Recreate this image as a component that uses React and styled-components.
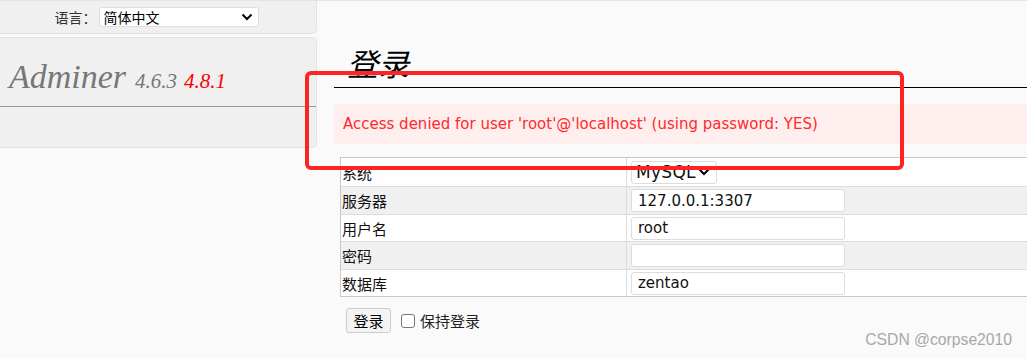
import React from 'react'
import styled, { createGlobalStyle } from 'styled-components'

const GlobalStyle = createGlobalStyle`
  html, body {
    margin: 0;
    padding: 0;
    background: #fafafa;
    overflow: hidden;
  }
  body {
    font-family: "DejaVu Sans", "Noto Sans CJK SC", sans-serif;
    font-size: 14px;
    color: #000;
  }
`

const Page = styled.div`
  position: relative;
  width: 1027px;
  height: 359px;
  display: flex;
  border-top: 1px solid #e4e4e4;
  box-sizing: border-box;
`

const Menu = styled.div`
  width: 317px;
  flex: none;
  display: flex;
  flex-direction: column;
  gap: 3px;
`

const Panel = styled.div`
  background: #f0f0f0;
  border: 1px solid #e2e2e2;
  border-left: none;
  border-radius: 0 0 5px 0;
  ${p => p.$top ? 'border-top: none;' : 'border-radius: 0 5px 5px 0;'}
`

const LangBar = styled(Panel)`
  height: 33px;
  display: flex;
  align-items: center;
  justify-content: center;
  gap: 2px;
  padding-right: 3px;
  box-sizing: border-box;
  font-family: "Noto Sans CJK SC", sans-serif;
  font-size: 14px;
  color: #333;
`

const SmallSelect = styled.div`
  width: 160px;
  height: 20px;
  background: #fff;
  border: 1px solid #ddd;
  border-radius: 3px;
  box-sizing: border-box;
  display: flex;
  align-items: center;
  justify-content: space-between;
  padding: 0 5px 0 4px;
  font-family: "Noto Sans CJK SC", sans-serif;
  font-size: 14px;
  color: #000;
`

const LogoPanel = styled(Panel)`
  height: 109px;
  display: flex;
  flex-direction: column;
`

const Logo = styled.h1`
  margin: 0;
  height: 69px;
  box-sizing: border-box;
  padding: 20px 0 0 9px;
  border-bottom: 1px solid #999;
  font-family: "Liberation Serif", serif;
  font-style: italic;
  font-weight: normal;
  font-size: 34px;
  color: #777;
  white-space: nowrap;
`

const Version = styled.span`
  font-size: 21px;
  margin-left: ${p => p.$new ? 7 : 9}px;
  color: ${p => p.$new ? '#f00' : '#777'};
`

const Content = styled.div`
  flex: 1;
  margin-left: 17px;
  display: flex;
  flex-direction: column;
`

const Title = styled.h2`
  margin: 0;
  height: 87px;
  box-sizing: border-box;
  padding: 43px 0 0 13px;
  border-bottom: 1px solid #000;
  font-family: "Noto Sans CJK SC", sans-serif;
  font-weight: normal;
  font-style: italic;
  font-size: 31px;
  line-height: 38px;
  color: #000;
`

const Error = styled.div`
  margin-top: 16px;
  height: 40px;
  background: #ffeeee;
  border-radius: 3px;
  display: flex;
  align-items: center;
  padding-left: 9px;
  color: #ff2a2a;
  font-family: "DejaVu Sans", sans-serif;
  font-size: 15px;
`

const Table = styled.div`
  margin: 13px 0 0 6px;
  width: 700px;
  border: 1px solid #c8c8c8;
  border-right: none;
  display: grid;
  grid-template-columns: 286px 1fr;
`

const Row = styled.div`
  display: contents;
  & > * {
    background: ${p => p.$alt ? '#f0f0f0' : '#fff'};
    border-top: ${p => p.$first ? 'none' : '1px solid #dcdcdc'};
    height: ${p => p.$h}px;
    box-sizing: border-box;
  }
`

const Label = styled.div`
  display: flex;
  align-items: center;
  padding-left: 1px;
  border-right: 1px solid #dcdcdc;
  font-family: "Noto Sans CJK SC", sans-serif;
  font-size: 15px;
  color: #111;
`

const Cell = styled.div`
  display: flex;
  align-items: center;
  padding-left: 4px;
`

const Input = styled.div`
  width: 214px;
  height: 23px;
  box-sizing: border-box;
  background: #fff;
  border: 1px solid #dcdcdc;
  border-radius: 3px;
  display: flex;
  align-items: center;
  padding-left: 6px;
  font-family: "DejaVu Sans", sans-serif;
  font-size: 15px;
  color: #111;
`

const Select = styled(Input)`
  width: 86px;
  padding-left: 4px;
  gap: 2px;
  font-size: 17px;
  letter-spacing: 0.3px;
`

const Actions = styled.div`
  margin: 11px 0 0 12px;
  display: flex;
  align-items: center;
  gap: 10px;
  font-family: "Noto Sans CJK SC", sans-serif;
  font-size: 15px;
  color: #222;
`

const Button = styled.div`
  width: 45px;
  height: 25px;
  box-sizing: border-box;
  border: 1px solid #ccc;
  border-radius: 3px;
  background: #f4f4f4;
  display: flex;
  align-items: center;
  justify-content: center;
  color: #000;
`

const Check = styled.label`
  display: flex;
  align-items: center;
  gap: 5px;
`

const Box = styled.span`
  width: 14px;
  height: 14px;
  box-sizing: border-box;
  border: 1px solid #777;
  border-radius: 3px;
  background: #fff;
`

const Mark = styled.div`
  position: absolute;
  left: 305px;
  top: 70px;
  width: 599px;
  height: 99px;
  box-sizing: border-box;
  border: 4px solid #ff2424;
  border-radius: 6px;
  pointer-events: none;
`

const Watermark = styled.div`
  position: absolute;
  right: 15px;
  top: 330px;
  font-family: "Liberation Sans", sans-serif;
  font-size: 15.7px;
  color: #a8a8a8;
`

const Chevron = () => (
  <svg width="12" height="8" viewBox="0 0 12 8">
    <path d="M1.5 1.5 L6 6 L10.5 1.5" fill="none" stroke="#000" strokeWidth="2" />
  </svg>
)

const rows = [
  { label: '系统', select: 'MySQL', h: 28 },
  { label: '服务器', value: '127.0.0.1:3307', h: 28 },
  { label: '用户名', value: 'root', h: 27 },
  { label: '密码', value: '', h: 28 },
  { label: '数据库', value: 'zentao', h: 27 },
]

const App = () => (
  <>
    <GlobalStyle />
    <Page>
      <Menu>
        <LangBar $top>
          <span>语言：</span>
          <SmallSelect>
            <span>简体中文</span>
            <Chevron />
          </SmallSelect>
        </LangBar>
        <LogoPanel>
          <Logo>
            Adminer<Version>4.6.3</Version><Version $new>4.8.1</Version>
          </Logo>
        </LogoPanel>
      </Menu>
      <Content>
        <Title>登录</Title>
        <Error>Access denied for user 'root'@'localhost' (using password: YES)</Error>
        <Table>
          {rows.map((r, i) => (
            <Row key={r.label} $alt={i % 2 === 1} $first={i === 0} $h={r.h}>
              <Label>{r.label}</Label>
              <Cell>
                {r.select
                  ? <Select>{r.select}<Chevron /></Select>
                  : <Input>{r.value}</Input>}
              </Cell>
            </Row>
          ))}
        </Table>
        <Actions>
          <Button>登录</Button>
          <Check><Box />保持登录</Check>
        </Actions>
      </Content>
      <Mark />
      <Watermark>CSDN @corpse2010</Watermark>
    </Page>
  </>
)

export default App
